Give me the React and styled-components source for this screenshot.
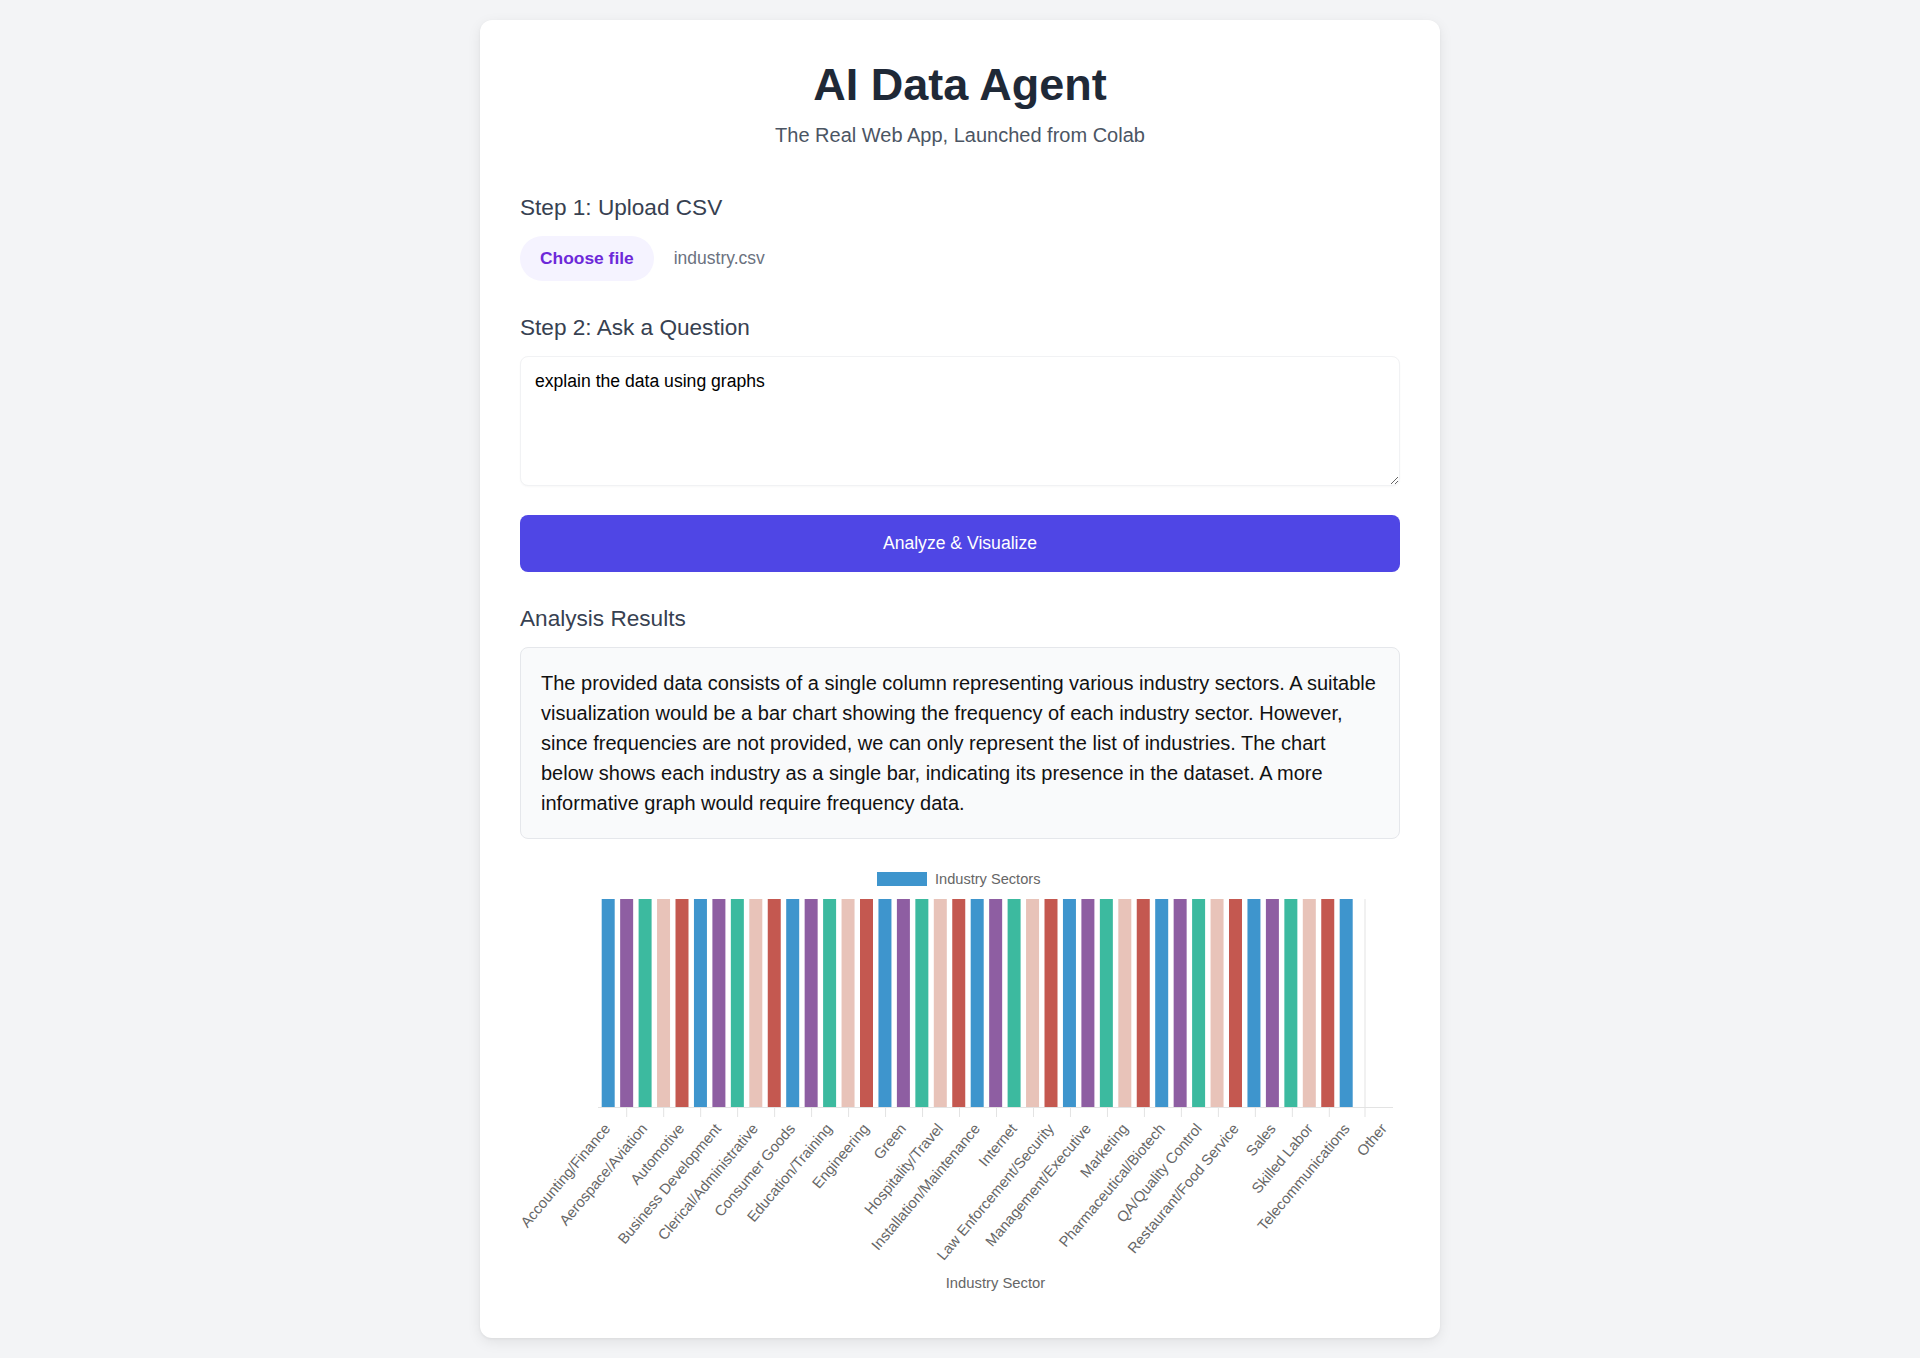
import React from "react";
import styled, { createGlobalStyle } from "styled-components";

const GlobalStyle = createGlobalStyle`
  html, body {
    margin: 0;
    padding: 0;
    background: #f3f4f6;
  }
  body {
    font-family: "Liberation Sans", Arial, Helvetica, sans-serif;
  }
  *, *::before, *::after {
    box-sizing: border-box;
  }
`;

const Page = styled.div`
  min-height: 1358px;
  padding: 20px 0;
  display: flex;
  justify-content: center;
  align-items: flex-start;
`;

const Card = styled.main`
  width: 960px;
  background: #ffffff;
  border-radius: 12px;
  box-shadow: 0 4px 14px rgba(0, 0, 0, 0.08), 0 1px 3px rgba(0, 0, 0, 0.05);
  padding: 40px;
  display: flex;
  flex-direction: column;
`;

const Header = styled.header`
  text-align: center;
  margin-bottom: 47px;
`;

const Title = styled.h1`
  margin: 0 0 13px;
  font-size: 45px;
  line-height: 1.1;
  font-weight: 700;
  color: #1f2937;
`;

const Subtitle = styled.p`
  margin: 0;
  font-size: 20px;
  line-height: 24px;
  color: #4b5563;
`;

const Section = styled.section`
  display: flex;
  flex-direction: column;
  & + & {
    margin-top: 33px;
  }
`;

const SectionTitle = styled.h2`
  margin: 0 0 14px;
  font-size: 22.6px;
  line-height: 28px;
  font-weight: 400;
  color: #374151;
`;

const FileRow = styled.div`
  display: flex;
  align-items: center;
  gap: 20px;
  height: 45px;
`;

const FileButton = styled.button`
  height: 45px;
  padding: 0 20px;
  border: 0;
  border-radius: 999px;
  background: #f5f3ff;
  color: #6d28d9;
  font-family: "Liberation Sans", Arial, sans-serif;
  font-size: 17.4px;
  font-weight: 700;
  cursor: pointer;
`;

const FileName = styled.span`
  font-size: 17.5px;
  color: #6b7280;
`;

const QuestionInput = styled.textarea`
  display: block;
  width: 100%;
  height: 130px;
  padding: 14px;
  border: 1px solid #f1f2f4;
  border-radius: 8px;
  box-shadow: 0 1px 2px rgba(0, 0, 0, 0.03);
  font-family: "Liberation Sans", Arial, sans-serif;
  font-size: 17.6px;
  color: #000000;
  background: #ffffff;
  outline: none;
`;

const AnalyzeButton = styled.button`
  display: block;
  width: 100%;
  height: 57px;
  margin-top: 29px;
  border: 0;
  border-radius: 8px;
  background: #4f46e5;
  color: #ffffff;
  font-family: "Liberation Sans", Arial, sans-serif;
  font-size: 17.6px;
  cursor: pointer;
`;

const ResultBox = styled.div`
  background: #f9fafb;
  border: 1px solid #e5e7eb;
  border-radius: 8px;
  padding: 20px;
  font-size: 20px;
  line-height: 30px;
  color: #111111;
`;

const ChartFigure = styled.figure`
  margin: 20px 0 0;
  height: 439px;
`;

const ChartSvg = styled.svg`
  display: block;
  width: 880px;
  height: 439px;
  overflow: visible;
  font-family: "Liberation Sans", Arial, Helvetica, sans-serif;
`;

const ChartText = styled.text`
  fill: #666666;
  font-size: ${(p) => p.$size || 14.8}px;
`;

const GridLine = styled.line`
  stroke: #e3e3e3;
  stroke-width: 1;
`;

const COLORS = ["#3e95cd", "#8e5ea2", "#3cba9f", "#e8c3b9", "#c45850"];

const LABELS = [
  "Accounting/Finance",
  "Aerospace/Aviation",
  "Automotive",
  "Business Development",
  "Clerical/Administrative",
  "Consumer Goods",
  "Education/Training",
  "Engineering",
  "Green",
  "Hospitality/Travel",
  "Installation/Maintenance",
  "Internet",
  "Law Enforcement/Security",
  "Management/Executive",
  "Marketing",
  "Pharmaceutical/Biotech",
  "QA/Quality Control",
  "Restaurant/Food Service",
  "Sales",
  "Skilled Labor",
  "Telecommunications",
  "Other",
];

const BAR_COUNT = 41;
const PITCH = 18.45;
const BAR_W = 13;
const TOP = 40;
const AXIS_Y = 248.5;
const TICK_STEP = 36.98;
const LABEL_ANGLE = -50;

function IndustryChart() {
  const bars = Array.from({ length: BAR_COUNT }, (_, i) => i);
  const ticks = Array.from({ length: 20 }, (_, k) => k);
  return (
    <ChartSvg viewBox="0 0 880 439">
      <rect x="357" y="13" width="50" height="14" fill="#3e95cd" />
      <ChartText x="415" y="25" $size={14.6}>
        Industry Sectors
      </ChartText>

      {bars.map((i) => (
        <rect
          key={i}
          x={81.7 + PITCH * i}
          y={TOP}
          width={BAR_W}
          height={AXIS_Y - TOP}
          fill={COLORS[i % COLORS.length]}
        />
      ))}

      <GridLine x1="78" y1={AXIS_Y} x2="873" y2={AXIS_Y} />
      {ticks.map((k) => {
        const x = 106.7 + TICK_STEP * k;
        return <GridLine key={k} x1={x} y1={AXIS_Y} x2={x} y2="258" />;
      })}
      <GridLine x1="845" y1={TOP} x2="845" y2="258" />

      {LABELS.map((label, k) => {
        const x = 91 + TICK_STEP * k;
        const y = 270;
        return (
          <ChartText
            key={label}
            x={x}
            y={y}
            textAnchor="end"
            transform={`rotate(${LABEL_ANGLE} ${x} ${y})`}
          >
            {label}
          </ChartText>
        );
      })}

      <ChartText x="475.5" y="429" textAnchor="middle" $size={14.8}>
        Industry Sector
      </ChartText>
    </ChartSvg>
  );
}

export default function App() {
  return (
    <>
      <GlobalStyle />
      <Page>
        <Card>
          <Header>
            <Title>AI Data Agent</Title>
            <Subtitle>The Real Web App, Launched from Colab</Subtitle>
          </Header>

          <Section>
            <SectionTitle>Step 1: Upload CSV</SectionTitle>
            <FileRow>
              <FileButton type="button">Choose file</FileButton>
              <FileName>industry.csv</FileName>
            </FileRow>
          </Section>

          <Section>
            <SectionTitle>Step 2: Ask a Question</SectionTitle>
            <QuestionInput defaultValue="explain the data using graphs" />
            <AnalyzeButton type="button">Analyze &amp; Visualize</AnalyzeButton>
          </Section>

          <Section>
            <SectionTitle>Analysis Results</SectionTitle>
            <ResultBox>
              The provided data consists of a single column representing various
              industry sectors. A suitable visualization would be a bar chart
              showing the frequency of each industry sector. However, since
              frequencies are not provided, we can only represent the list of
              industries. The chart below shows each industry as a single bar,
              indicating its presence in the dataset. A more informative graph
              would require frequency data.
            </ResultBox>
            <ChartFigure>
              <IndustryChart />
            </ChartFigure>
          </Section>
        </Card>
      </Page>
    </>
  );
}
